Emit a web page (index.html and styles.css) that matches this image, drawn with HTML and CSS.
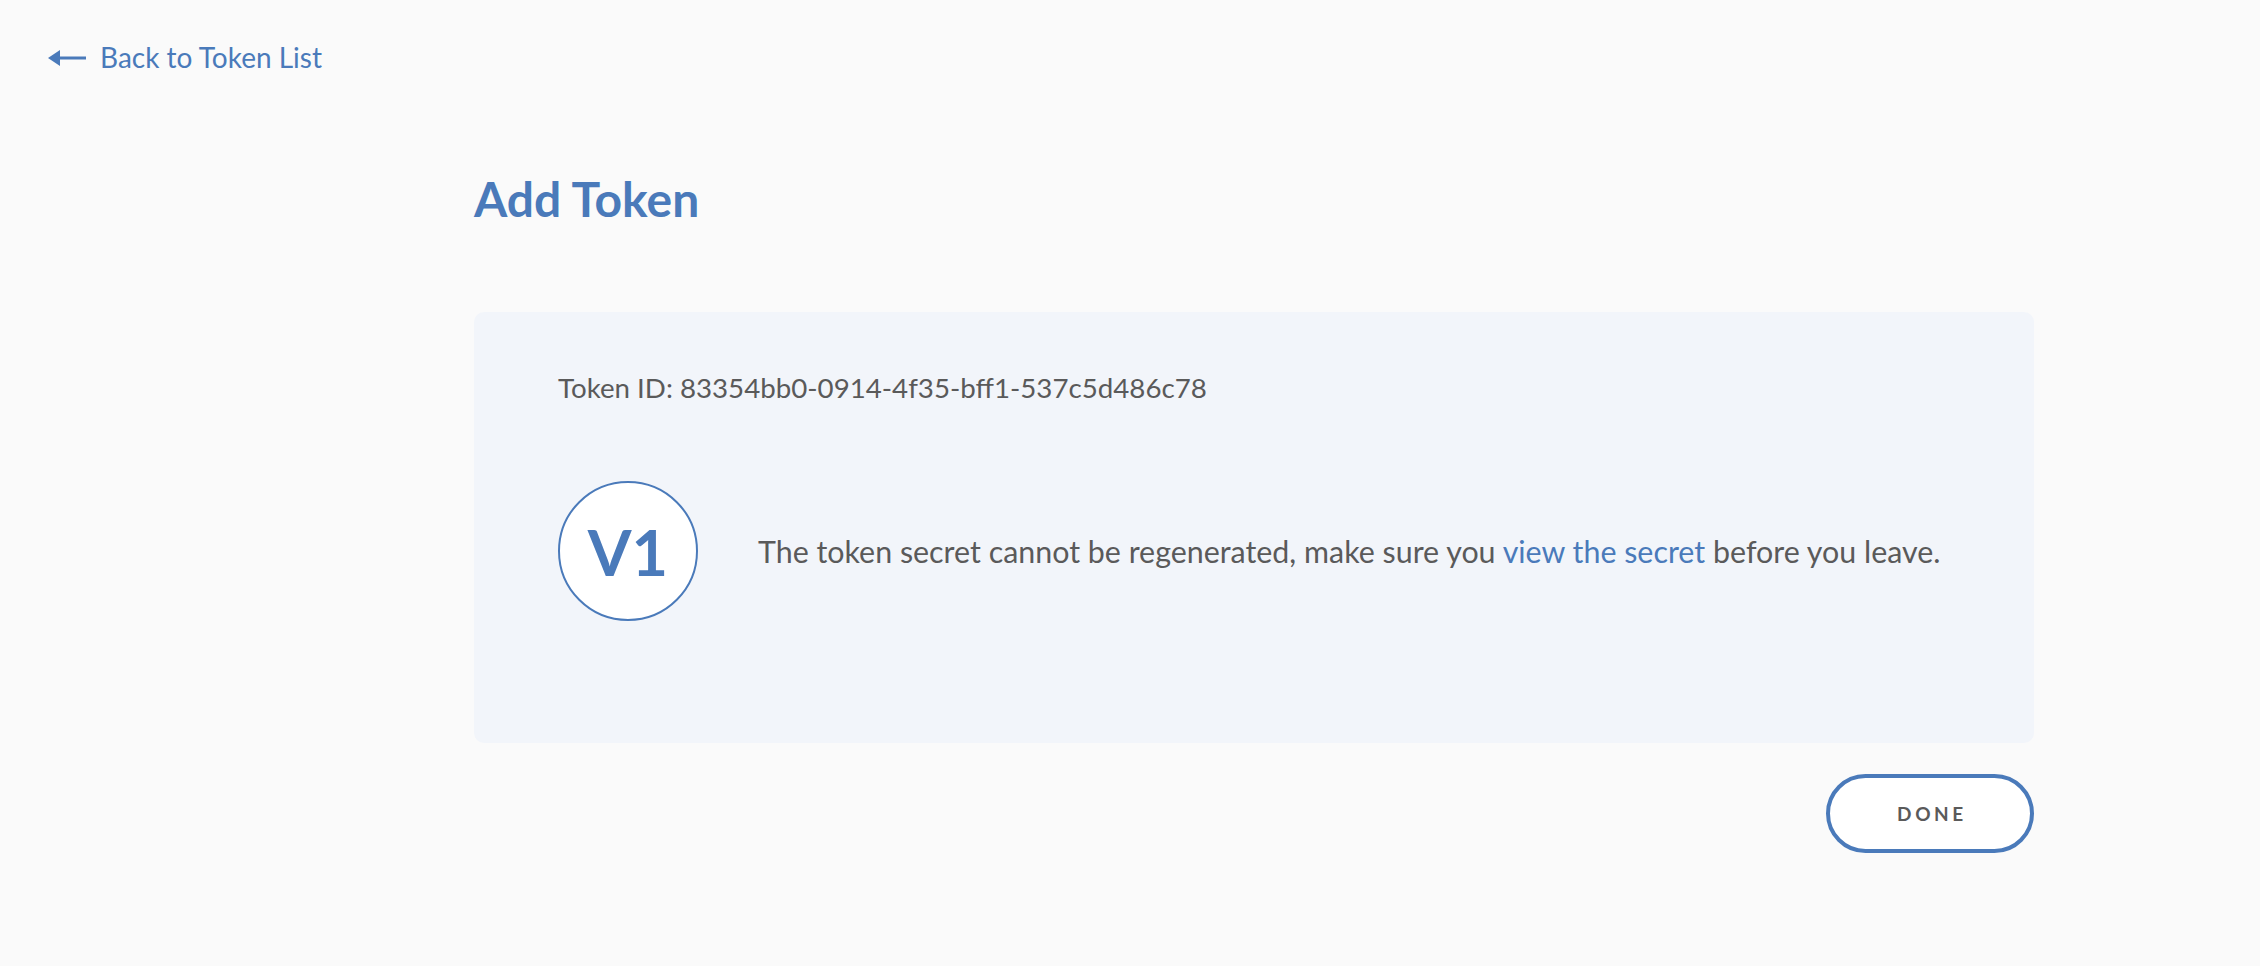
FILE: index.html
```html
<!DOCTYPE html>
<html lang="en">
<head>
<meta charset="utf-8">
<title>Add Token</title>
<link rel="stylesheet" href="styles.css">
</head>
<body>
<div class="page">
  <a class="back" href="#">
    <svg class="back-arrow" width="38" height="18" viewBox="0 0 38 18" aria-hidden="true">
      <path d="M0 9 L12 1 L12 7.5 L38 7.5 L38 10.5 L12 10.5 L12 17 Z" fill="#4a7aba"/>
    </svg>
    <span>Back to Token List</span>
  </a>
  <main class="content">
    <h1 class="title">Add Token</h1>
    <section class="card">
      <p class="token-id">Token ID: 83354bb0-0914-4f35-bff1-537c5d486c78</p>
      <div class="notice">
        <div class="badge">V1</div>
        <p class="message">The token secret cannot be regenerated, make sure you <a href="#" class="link">view the secret</a> before you leave.</p>
      </div>
    </section>
    <div class="actions">
      <button class="done" type="button">DONE</button>
    </div>
  </main>
</div>
</body>
</html>
```
FILE: styles.css
```css
html, body {
  margin: 0;
  padding: 0;
  background: #fafafa;
}
body {
  font-family: Lato, "Open Sans", sans-serif;
  color: #5a5a5a;
}
.page {
  padding: 40px 0 0 48px;
}
.back {
  display: inline-flex;
  align-items: center;
  gap: 14px;
  color: #4a7aba;
  text-decoration: none;
  font-size: 28px;
  line-height: 34px;
}
.back-arrow {
  display: block;
  margin-top: 2px;
}
.content {
  margin-left: 426px;
  width: 1560px;
}
.title {
  margin: 96px 0 0;
  font-size: 48px;
  line-height: 58px;
  font-weight: 700;
  color: #4a7aba;
}
.card {
  margin-top: 84px;
  background: #f2f5fa;
  border-radius: 10px;
  padding: 59px 84px 122px;
  box-sizing: border-box;
  height: 431px;
}
.token-id {
  margin: 0;
  font-size: 27.7px;
  line-height: 34px;
}
.notice {
  margin-top: 76px;
  display: flex;
  align-items: center;
  gap: 60px;
}
.badge {
  width: 140px;
  height: 140px;
  box-sizing: border-box;
  border: 2px solid #4a7aba;
  border-radius: 50%;
  background: #fff;
  display: flex;
  align-items: center;
  justify-content: center;
  color: #4a7aba;
  font-weight: 700;
  font-size: 63px;
  flex: none;
}
.message {
  margin: 0;
  font-size: 30.4px;
  line-height: 36px;
}
.link {
  color: #4a7aba;
  text-decoration: none;
}
.actions {
  display: flex;
  justify-content: flex-end;
  margin-top: 31px;
}
.done {
  width: 208px;
  height: 79px;
  box-sizing: border-box;
  border: 4px solid #4a7aba;
  border-radius: 40px;
  background: #fff;
  font-family: Lato, sans-serif;
  font-weight: 700;
  font-size: 19px;
  letter-spacing: 3.6px;
  color: #5a5a5a;
  padding: 0 0 0 4px;
  cursor: pointer;
}
```
